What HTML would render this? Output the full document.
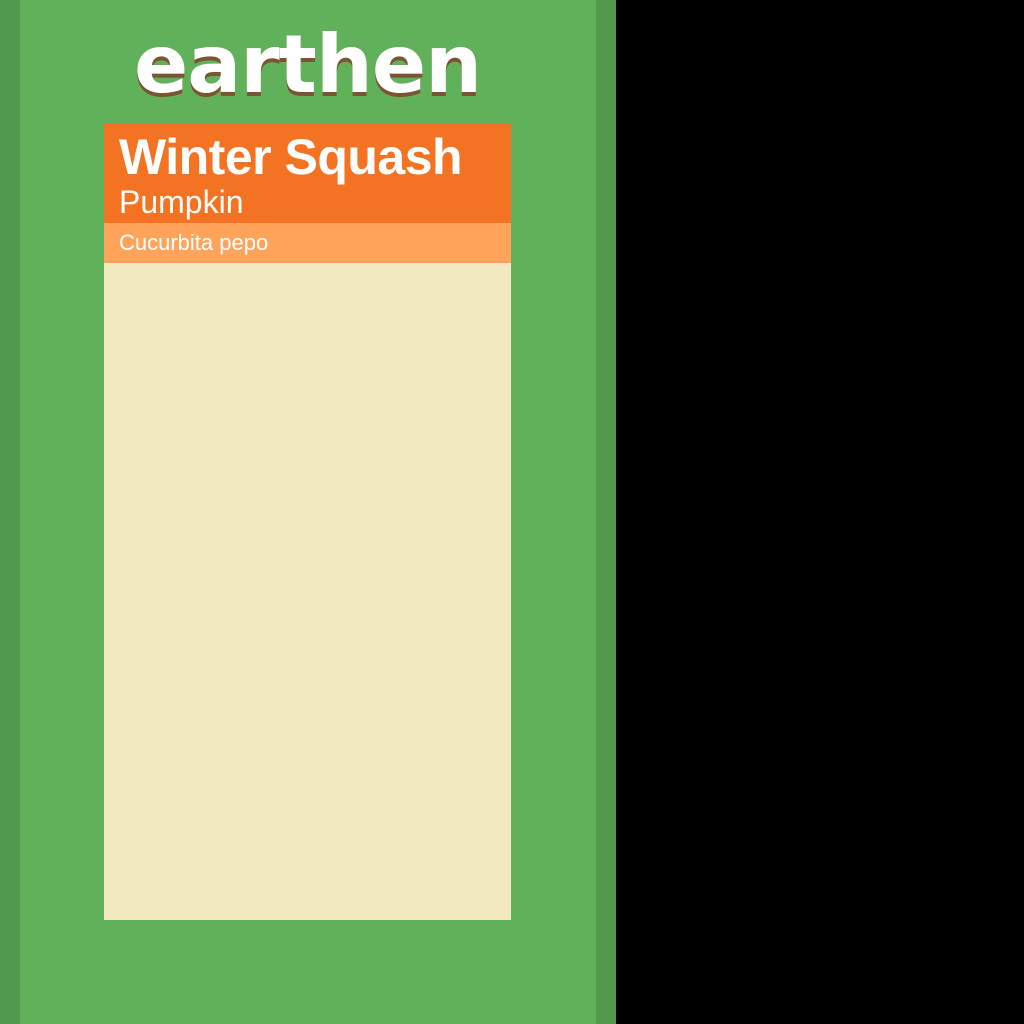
<!DOCTYPE html>
<html><head><style>
body{margin:0;width:1024px;height:1024px;background:#000;position:relative;overflow:hidden;font-family:"Liberation Sans",sans-serif}
.side{position:absolute;top:0;left:0;width:616px;height:1024px;background:#519a4d}
.main{position:absolute;top:0;left:20px;width:576px;height:1024px;background:#61b05a}
.logo{position:absolute;left:104px;width:407px;top:18px;text-align:center;font-size:80px;font-weight:bold;color:#fff;font-family:"DejaVu Sans",sans-serif;letter-spacing:-1px;text-shadow:0 4px 0 #7a5533;transform:scaleX(1.0)}
.card{position:absolute;left:104px;top:124px;width:407px;height:796px;background:#f3e9c0}
.h{background:#f47322;height:99px;color:#fff}
.h1{position:absolute;left:15px;top:4px;font-size:50px;font-weight:bold;letter-spacing:-0.5px}
.h2{position:absolute;left:15px;top:60px;font-size:32px}
.s{background:#ffa45a;height:40px;color:#fff;font-size:22px;line-height:40px;padding-left:15px}
</style></head><body>
<div class="side"></div><div class="main"></div>
<div class="logo">earthen</div>
<div class="card"><div class="h"><div class="h1">Winter Squash</div><div class="h2">Pumpkin</div></div><div class="s">Cucurbita pepo</div></div>
</body></html>
